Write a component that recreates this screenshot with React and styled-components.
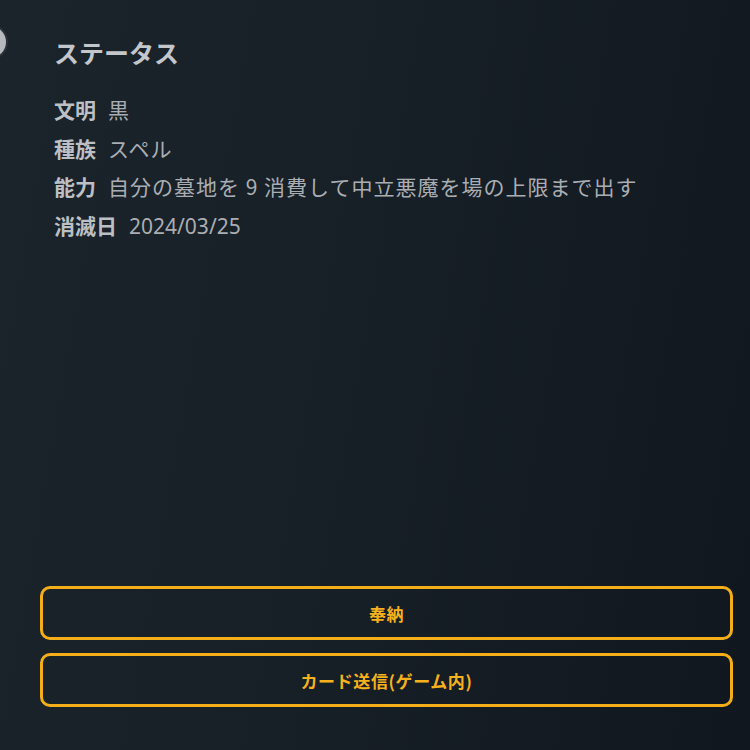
import React from "react";
import styled, { createGlobalStyle } from "styled-components";

const GlobalStyle = createGlobalStyle`
  html, body {
    margin: 0;
    padding: 0;
    background: #151d25;
  }
  * {
    box-sizing: border-box;
  }
`;

const Page = styled.div`
  position: relative;
  width: 750px;
  height: 750px;
  overflow: hidden;
  display: flex;
  flex-direction: column;
  justify-content: space-between;
  padding: 34px 17px 43px 40px;
  background: linear-gradient(100deg, #1b232b 0%, #171f27 45%, #10171f 100%);
  font-family: "Noto Sans CJK JP", "Noto Sans", sans-serif;
`;

const CloseDot = styled.div`
  position: absolute;
  left: -28px;
  top: 24px;
  width: 36px;
  height: 36px;
  border-radius: 50%;
  background: #b5b8bc;
  border: 2px solid #2c323a;
`;

const Status = styled.section`
  padding-left: 14px;
`;

const Title = styled.h2`
  margin: 0 0 20px;
  font-size: 25px;
  font-weight: 700;
  line-height: 36px;
  color: #c3c6ca;
`;

const Row = styled.div`
  display: flex;
  align-items: baseline;
  gap: 12px;
  font-size: 21px;
  line-height: 38.5px;
  color: #aaaeb3;
`;

const Label = styled.span`
  font-weight: 700;
  color: #bcc0c4;
`;

const Value = styled.span`
  font-weight: 400;
  letter-spacing: ${(p) => (p.latin ? "0" : "1px")};
  font-family: ${(p) =>
    p.latin ? `"Noto Sans", "Noto Sans CJK JP", sans-serif` : `inherit`};
`;

const Actions = styled.div`
  display: flex;
  flex-direction: column;
  gap: 13px;
`;

const ActionButton = styled.button`
  height: 54px;
  width: 100%;
  background: transparent;
  border: 3px solid #f3ae1a;
  border-radius: 10px;
  color: #f6b21c;
  font-family: "Noto Sans CJK JP", "Noto Sans", sans-serif;
  font-size: 17px;
  font-weight: 700;
  letter-spacing: 0.6px;
  cursor: pointer;
`;

const rows = [
  { label: "文明", value: "黒" },
  { label: "種族", value: "スペル" },
  { label: "能力", value: "自分の墓地を 9 消費して中立悪魔を場の上限まで出す" },
  { label: "消滅日", value: "2024/03/25", latin: true },
];

export default function App() {
  return (
    <Page>
      <GlobalStyle />
      <CloseDot />
      <Status>
        <Title>ステータス</Title>
        {rows.map((r) => (
          <Row key={r.label}>
            <Label>{r.label}</Label>
            <Value latin={r.latin}>{r.value}</Value>
          </Row>
        ))}
      </Status>
      <Actions>
        <ActionButton>奉納</ActionButton>
        <ActionButton>カード送信(ゲーム内)</ActionButton>
      </Actions>
    </Page>
  );
}
